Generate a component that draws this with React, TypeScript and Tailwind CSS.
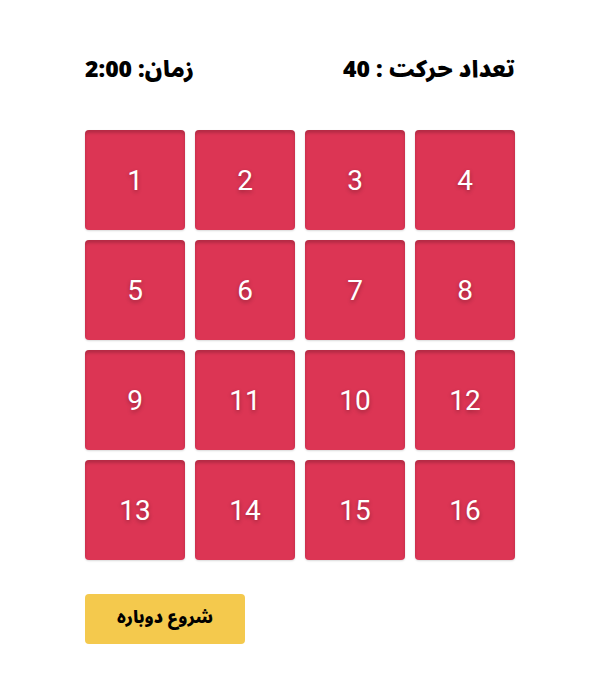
import React from 'react';

const tiles = [1, 2, 3, 4, 5, 6, 7, 8, 9, 11, 10, 12, 13, 14, 15, 16];

export default function App() {
  return (
    <div className="min-h-[691px] bg-white flex justify-center">
      <div className="w-[430px] pt-[55px]" dir="rtl">
        <div className="flex justify-between items-center h-[30px] text-[23px] font-black text-black [font-family:'Noto_Sans_Arabic','DejaVu_Sans',sans-serif]">
          <span>تعداد حرکت : 40</span>
          <span>زمان: 2:00</span>
        </div>

        <div className="grid grid-cols-4 gap-[10px] mt-[45px]" dir="ltr">
          {tiles.map((n) => (
            <div
              key={n}
              className="h-[100px] rounded-[4px] bg-[#dc3554] shadow-[inset_0_3px_3px_rgba(0,0,0,0.18),0_1px_2px_rgba(0,0,0,0.15)] flex items-center justify-center pt-[2px] text-white text-[28px] [font-family:Roboto,sans-serif] [text-shadow:0_2px_4px_rgba(0,0,0,0.3)]"
            >
              {n}
            </div>
          ))}
        </div>

        <button className="mt-[34px] w-[160px] h-[50px] rounded-[4px] bg-[#f4c94d] text-black text-[17px] font-black [font-family:'Noto_Sans_Arabic','DejaVu_Sans',sans-serif] flex items-center justify-center mr-auto">
          شروع دوباره
        </button>
      </div>
    </div>
  );
}
